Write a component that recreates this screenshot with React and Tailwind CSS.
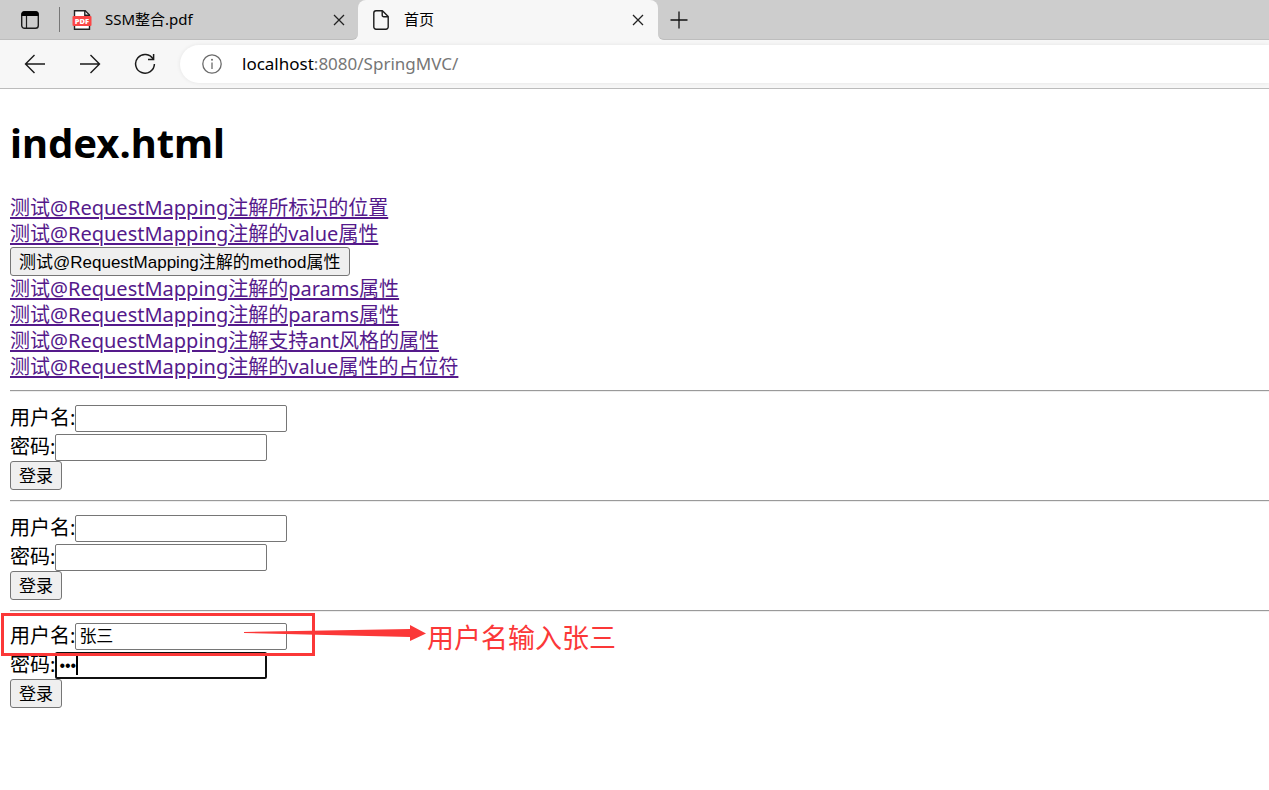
const links = [
  "测试@RequestMapping注解的params属性",
  "测试@RequestMapping注解的params属性",
  "测试@RequestMapping注解支持ant风格的属性",
  "测试@RequestMapping注解的value属性的占位符",
];

const linkClass = "text-[#551a8b] underline decoration-2 underline-offset-2";
const buttonClass =
  "block rounded-[3px] border border-[#767676] bg-[#efefef] px-2 pt-[2px] font-['Liberation_Sans','Noto_Sans_CJK_SC',sans-serif] text-[17px] leading-[25px] text-black";
const inputClass =
  "h-[27px] w-53 rounded-[2px] bg-white font-['Liberation_Sans','Noto_Sans_CJK_SC',sans-serif] text-black outline-none";
const plainInput = `${inputClass} border border-[#767676] px-[3px] text-[17px]`;
const focusedInput = `${inputClass} border-2 border-[#101010] px-[2px] text-[16px]`;

function CloseIcon() {
  return (
    <svg width="12" height="12" viewBox="0 0 12 12" fill="none" stroke="#222" strokeWidth="1.3">
      <path d="M1 1l10 10M11 1L1 11" />
    </svg>
  );
}

function TabsIcon() {
  return (
    <svg width="20" height="20" viewBox="0 0 20 20" fill="none">
      <rect x="1.7" y="1.7" width="16.6" height="16.6" rx="2.8" stroke="#1b1b1b" strokeWidth="1.4" />
      <path d="M1.5 6V4.2a3 3 0 0 1 3-3h11a3 3 0 0 1 3 3V6z" fill="#000" />
      <path d="M6.5 6v12" stroke="#1b1b1b" strokeWidth="1.2" />
    </svg>
  );
}

function PdfIcon() {
  return (
    <svg width="20" height="22" viewBox="0 0 20 22">
      <path d="M2.5 1.7h10.7l4.3 4.3v14.3h-15z" fill="#fff" stroke="#222" strokeWidth="1.4" />
      <path d="M12.8 1.5V6.3h4.8" fill="none" stroke="#222" strokeWidth="1.4" />
      <rect x="0.5" y="7" width="19" height="10" rx="1" fill="#fb4646" />
      <text x="10" y="14.7" textAnchor="middle" fill="#fff" fontSize="7.5" fontWeight="800" fontFamily="Open Sans, sans-serif">
        PDF
      </text>
    </svg>
  );
}

function PageIcon() {
  return (
    <svg width="16" height="20" viewBox="0 0 16 20" fill="none" stroke="#1b1b1b" strokeWidth="1.4" strokeLinejoin="round">
      <path d="M3 .8h6.4l5.8 5.8v10.4a2.2 2.2 0 0 1-2.2 2.2H3A2.2 2.2 0 0 1 .8 17V3A2.2 2.2 0 0 1 3 .8z" />
      <path d="M9.2 1v4.2a1.6 1.6 0 0 0 1.6 1.6h4.2" />
    </svg>
  );
}

function TabBar() {
  return (
    <div className="flex h-10 bg-[#f7f7f7] text-[15px] text-black">
      <div className="flex min-w-0 shrink items-center rounded-br-md border-b border-[#bdbdbd] bg-[#cdcdcd] pl-5">
        <button type="button" aria-label="Tab actions">
          <TabsIcon />
        </button>
        <span className="ml-[19px] h-[25px] w-px bg-[#777]" />
        <a href="#pdf" className="ml-3 flex w-[273px] items-center">
          <PdfIcon />
          <span className="ml-[13px] grow pb-[2px] leading-5">SSM整合.pdf</span>
          <CloseIcon />
        </a>
        <span className="w-[13px]" />
      </div>
      <div className="flex w-75 bg-[#cdcdcd]">
        <div className="flex grow items-center rounded-t-lg bg-[#f7f7f7] pr-[14px] pl-[15px]">
          <PageIcon />
          <span className="ml-[15px] grow pb-[2px] leading-5">首页</span>
          <button type="button" aria-label="Close tab">
            <CloseIcon />
          </button>
        </div>
      </div>
      <div className="flex grow items-center rounded-bl-md border-b border-[#bdbdbd] bg-[#cdcdcd] pl-3">
        <button type="button" aria-label="New tab">
          <svg width="18" height="18" viewBox="0 0 18 18" stroke="#111" strokeWidth="1.3">
            <path d="M9 .5v17M.5 9h17" />
          </svg>
        </button>
      </div>
    </div>
  );
}

function Toolbar() {
  return (
    <div className="flex h-[49px] items-center border-b border-[#bcbcbc] bg-[#f7f7f7] pl-6">
      <div className="flex items-center gap-[33px]">
        <button type="button" aria-label="Back">
          <svg width="22" height="20" viewBox="0 0 22 20" fill="none" stroke="#1b1b1b" strokeWidth="1.4">
            <path d="M10.5 1L1.5 10l9 9M1.5 10H21" />
          </svg>
        </button>
        <button type="button" aria-label="Forward">
          <svg width="22" height="20" viewBox="0 0 22 20" fill="none" stroke="#1b1b1b" strokeWidth="1.4">
            <path d="M11.5 1l9 9-9 9M20.5 10H1" />
          </svg>
        </button>
        <button type="button" aria-label="Refresh">
          <svg width="22" height="22" viewBox="0 0 22 22" fill="none" stroke="#1b1b1b" strokeWidth="1.5">
            <path d="M19.2 6.2A9.4 9.4 0 1 0 20.4 11" />
            <path d="M19.6 1v5.6h-5.6" />
          </svg>
        </button>
      </div>
      <div className="ml-6 flex h-[38px] grow items-center rounded-l-full bg-white pl-[22px] shadow-[0_0_4px_rgba(0,0,0,0.08)]">
        <svg width="20" height="20" viewBox="0 0 20 20" fill="none" stroke="#6b6b6b" strokeWidth="1.3">
          <circle cx="10" cy="10" r="9.2" />
          <path d="M10 8.5v6.5" />
          <circle cx="10" cy="5.8" r="1" fill="#6b6b6b" stroke="none" />
        </svg>
        <span className="ml-5 text-[17px] leading-6 text-[#767676]">
          <span className="text-black">localhost</span>:8080/SpringMVC/
        </span>
      </div>
    </div>
  );
}

function Divider() {
  return <hr className="my-[10px] h-[2px] border-t border-b border-t-[#9a9a9a] border-b-[#eee]" />;
}

function LoginForm({ id, annotated }) {
  return (
    <form onSubmit={(e) => e.preventDefault()}>
      <div className={`relative flex items-end leading-[29px] ${annotated ? "h-7" : "h-[30px]"}`}>
        <label htmlFor={`username-${id}`}>用户名:</label>
        <input id={`username-${id}`} type="text" defaultValue={annotated ? "张三" : ""} className={plainInput} />
        {annotated && <Annotation />}
      </div>
      <div className="relative flex h-[29px] items-end leading-[29px]">
        <label htmlFor={`password-${id}`}>密码:</label>
        <input
          id={`password-${id}`}
          type="password"
          defaultValue={annotated ? "123" : ""}
          className={annotated ? focusedInput : plainInput}
        />
        {annotated && <span className="absolute top-[5px] left-[66px] h-5 w-[2px] bg-black" />}
      </div>
      <button type="submit" className={buttonClass}>
        登录
      </button>
    </form>
  );
}

function Annotation() {
  return (
    <>
      <div className="absolute -top-[9px] -left-[9px] z-10 h-[43px] w-[314px] border-3 border-[#fb3838]" />
      <div className="absolute top-0 left-[234px] z-20 flex items-start text-[#fb3838]">
        <svg className="mt-[2px]" width="183" height="18" viewBox="0 0 183 18" fill="currentColor">
          <path d="M0 8L166 5V1L182 9.5L166 17V13L0 9z" />
        </svg>
        <span className="text-[27px] leading-8 whitespace-nowrap">用户名输入张三</span>
      </div>
    </>
  );
}

export default function App() {
  return (
    <div className="min-h-screen bg-white font-['Noto_Sans','Noto_Sans_CJK_SC',sans-serif]">
      <TabBar />
      <Toolbar />
      <main className="overflow-hidden pl-[10px] text-[20px] leading-[26px] text-black">
        <h1 className="mt-[27px] mb-[25px] text-[40px] leading-[54px] font-bold">index.html</h1>
        <div>
          <a href="#position" className={linkClass}>
            测试@RequestMapping注解所标识的位置
          </a>
        </div>
        <div>
          <a href="#value" className={linkClass}>
            测试@RequestMapping注解的value属性
          </a>
        </div>
        <button type="button" className={buttonClass}>
          测试@RequestMapping注解的method属性
        </button>
        {links.map((text, i) => (
          <div key={i}>
            <a href={`#link-${i}`} className={linkClass}>
              {text}
            </a>
          </div>
        ))}
        <Divider />
        <LoginForm id="first" />
        <Divider />
        <LoginForm id="second" />
        <Divider />
        <LoginForm id="third" annotated />
      </main>
    </div>
  );
}
